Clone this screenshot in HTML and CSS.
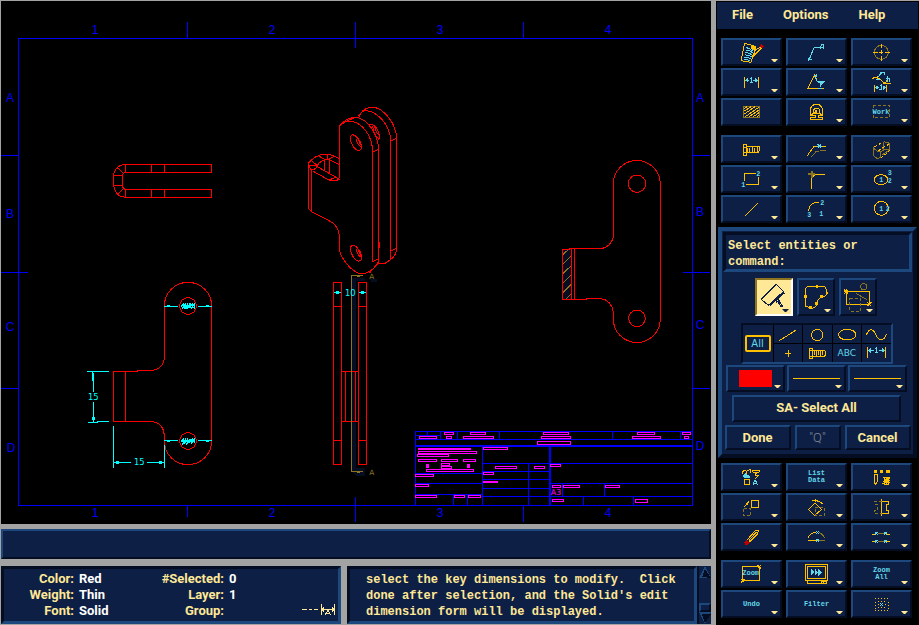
FILE: index.html
```html
<!DOCTYPE html>
<html lang="en">
<head>
<meta charset="utf-8">
<title>Drafting</title>
<link rel="stylesheet" href="styles.css">
</head>
<body>
<div class="app">
<main class="work">
<section class="canvas" aria-label="Drawing">
<svg class="drawing" viewBox="1 1 710 523" preserveAspectRatio="xMinYMin meet">
<g class="blue">
<path d="M18.500 38.500H692.500V505.500H18.500Z"/>
<path d="M187.500 22V38M523.500 22V38M355.500 22V48M187.500 505V517M523.500 505V522M355.500 497V522M1 155.500H18M1 388.500H18M693 155.500H710M693 388.500H710"/>
<path d="M1 272.500H28M683 272.500H710"/>
</g>
<g class="zone">
<text x="95" y="34">1</text><text x="272" y="34">2</text><text x="440" y="34">3</text><text x="608" y="34">4</text>
<text x="95" y="517">1</text><text x="272" y="517">2</text><text x="440" y="517">3</text><text x="608" y="517">4</text>
<text x="10" y="102">A</text><text x="10" y="218">B</text><text x="10" y="331">C</text><text x="11" y="452">D</text>
<text x="700" y="102">A</text><text x="700" y="216">B</text><text x="700" y="329">C</text><text x="700" y="450">D</text>
</g>
<!-- top view and side view -->
<g transform="translate(80 150) scale(.33333)">
<path class="r" d="M136 43H395V67H136ZM136 118H395V142H136ZM214 43V67M253 43V67M214 118V142M253 118V142M136 43Q123 43 112 53Q101 65 101 76V106Q102 120 112 133Q123 142 136 142M136 67Q127 71 127 77V106Q128 116 136 118M101 76H127M101 106H127M112 53L130 70M112 133L130 116"/>
<path class="r" d="M253 625V468A71 71 0 0 1 395 468V873A71 71 0 0 1 253 873V855Q250 820 219 815H101V664H174V661H219Q250 655 253 625ZM136 664V815"/>
<circle class="r" cx="324" cy="468" r="25"/><circle class="r" cx="324" cy="873" r="25"/>
<path class="dim" d="M253 469H293M354 469H395M253 872H293M354 872H395M260 466H270M378 466H387M260 875H270M378 875H387M21 664H87M38 667V692M41 670V726M41 756V817M24 818H54V815H87M101 828V953M253 885V953M101 937H153M201 937H253"/>
<path class="dim" d="M302 472L312 460L308 477L318 458L314 477L324 461L320 478L331 459L328 474L338 461L335 476L343 460V478M303 466H345M306 472H342M302 877L312 865L308 884L318 863L314 882L324 864L320 884L331 866L328 878L338 866L335 881L343 865V880M303 871H345M306 876H342"/>
<path class="cf" d="M107 933H117V942H107ZM237 933H247V942H237ZM36 801H45V811H36ZM38 670H43V680H38Z"/>
<text class="dimtext" x="40" y="750">15</text><text class="dimtext" x="178" y="946">15</text>
</g>
<!-- isometric view -->
<g class="r" transform="translate(290 90) scale(.33333)">
<path d="M149 262V108Q163 94 178 93C215 95 247 135 248 186V515M149 108Q166 84 195 82C235 84 264 135 266 180V515Q248 548 215 552C182 546 154 505 148 480V438Q146 405 115 391L65 365L55 355V220"/>
<path d="M172 93L195 82H206Q215 55 245 51C282 53 318 100 320 145V478Q316 502 300 510L285 520H264M206 78Q215 62 230 62C262 65 300 105 302 150V508M302 153L320 145M248 186L266 178M302 483L320 475M248 515L266 507M238 549L264 520M243 548V540M268 456V475"/>
<path d="M181 140Q188 128 202 143Q216 158 215 174Q209 189 196 177Q180 160 181 140M198 147Q203 166 213 170M206 150Q207 160 214 166M181 472Q188 460 202 473Q216 489 215 506Q209 520 196 508Q180 491 181 472M198 478Q203 497 213 501M206 481Q207 491 214 497M238 103Q256 102 265 125Q270 138 266 150M248 108Q250 128 260 140L268 148M254 110Q256 126 268 136"/>
<path d="M55 220Q75 195 105 192Q130 193 149 208M65 365V242L55 226M58 226H82Q79 238 65 240M64 212L82 226M82 226Q92 210 115 207L149 224M103 210V242M118 207V250M88 199L106 209M112 193V207M68 243L122 273H140L149 262M82 230L138 262L149 268M118 270L136 262M133 198L118 207"/>
</g>
<!-- front view with section line -->
<g transform="translate(310 265) scale(.33333)">
<path class="shade" d="M125 40H165V48H138V610H164V634H140L125 619ZM180 42H200V50H184Z"/>
<path class="r" d="M70 52H95V598H70ZM70 124H95M70 526H95M145 52H170V598H145ZM145 124H170M145 526H170M95 319H145V469H95ZM107 319V469M136 319V469"/>
<path class="d" d="M158 31H125V619H158M140 34H150M140 622H150"/>
<text class="mark" x="185" y="43">A</text><text class="mark" x="185" y="631">A</text>
<path class="dim" d="M71 82H94M146 82H169"/>
<path class="cf" d="M78 79H88V87H78ZM153 79H163V87H153Z"/>
<text class="dimtext" x="121" y="92">10</text>
</g>
<!-- section A-A -->
<g transform="translate(540 150) scale(.33333)">
<path class="shade" d="M69 300H93V446H69Z"/>
<path class="d" d="M69 313L86 298M68 343L94 317M68 371L94 347M68 400L94 375M68 429L94 403M77 448L94 432"/>
<path class="r" d="M220 262V102A70.500 70.500 0 0 1 361 102V507A70.500 70.500 0 0 1 220 507V485Q214 450 180 445H140V448H67V298H90V296H185Q212 290 220 262ZM94 298V448M103 298V448"/>
<circle class="r" cx="291" cy="101" r="26"/><circle class="r" cx="291" cy="505" r="25"/>
</g>
<!-- title block -->
<g transform="translate(405 420) scale(.33333)">
<path class="blueline" d="M31 256V34H862M31 58H862M31 46H106M68 34V46M106 34V58M157 34V58M283 34V58M622 34V58M826 34V58M31 76H862M31 80H862M232 80V256M433 80V256M436 80V256M232 130H862M370 130V256M232 154H433M232 178H433M232 205H433M31 160H232M31 190H232M31 223H232M145 223V256M187 223V256M433 190H862M232 229H862M472 190V229M598 190V229M535 229V256M685 229V256"/>
<path class="mag" d="M118 37H146V44H118ZM198 37H242V44H198ZM415 37H491V44H415ZM697 37H749V44H697ZM832 37H857V44H832ZM43 49H95V56H43ZM124 49H140V56H124ZM175 49H266V56H175ZM409 49H497V56H409ZM682 49H767V56H682ZM838 49H851V56H838ZM397 64H497V74H397ZM235 82H308V89H235ZM40 94H215V101H40ZM37 103H131V110H37ZM40 118H95V125H40ZM109 118H158V125H109ZM175 118H212V125H175ZM109 130H134V137H109ZM109 139H140V146H109ZM64 148H206V155H64ZM33 163H86V170H33ZM33 193H71V200H33ZM33 226H95V233H33ZM148 226H179V233H148ZM190 226H227V233H190ZM271 139H335V146H271ZM388 139H419V146H388ZM235 157H266V164H235ZM438 133H467V140H438ZM442 196H467V203H442ZM475 196H524V203H475ZM601 196H644V203H601ZM442 238H476V245H442ZM691 238H728V248H691Z"/>
<path class="mf" d="M39 84H198V90H39ZM63 132H72V144H63ZM186 132H195V144H186ZM234 183H279V189H234Z"/>
<text class="size" x="453" y="226">A3</text>
</g>
</svg>
</section>
<div class="prompt" role="status"></div>
<div class="footer">
<section class="status">
<dl>
<dt>Color:</dt><dd>Red</dd><dt>#Selected:</dt><dd>0</dd>
<dt>Weight:</dt><dd>Thin</dd><dt>Layer:</dt><dd>1</dd>
<dt>Font:</dt><dd>Solid</dd><dt>Group:</dt><dd></dd>
</dl>
<svg class="mode" viewBox="903 282 108 36"><path class="y" d="M906 298H921M927 298H936M942 298H954M964 283V315M1004 283V315M966 298H1002M966 298L972 292M966 298L972 304M1002 298L996 292M1002 298L996 304M975 316L984 301L993 316M978 311H991"/></svg>
</section>
<section class="help">
<p>select the key dimensions to modify.&nbsp; Click<br>done after selection, and the Solid's edit<br>dimension form will be displayed.</p>
</section>
<div class="scroll">
<button type="button" aria-label="Scroll up"><svg viewBox="0 0 12 12"><path class="lite" d="M0 12L6 0L12 12Z"/><path class="deep" d="M3 11L6 3L12 12Z"/></svg></button>
<div class="track"><span class="thumb"></span></div>
<button type="button" aria-label="Scroll down"><svg viewBox="0 0 12 12"><path class="lite" d="M0 0H12L6 12Z"/><path class="deep" d="M3 2H12L6 11Z"/></svg></button>
</div>
</div>
</main>
<aside class="panel">
<nav class="menu"><button type="button">File</button><button type="button">Options</button><button type="button">Help</button></nav>
<div class="tools">
<button type="button" class="tool" aria-label="Sheet"><svg viewBox="24 120 171 72"><path class="o" d="M89 130L78 182L108 187L120 151M89 130L122 139L120 151L141 139M119 160L110 170L112 172L141 143"/><path class="of" d="M108 136L122 139V149H110Z"/><path class="c" d="M93 143L102 145L110 152L118 148M92 150L104 153L113 158M90 157L102 160L111 164M89 164L101 167L110 170M87 171L98 173L108 176M86 178L96 179L106 182"/><path class="rf" d="M134 138L140 133L148 140L140 145Z"/></svg></button>
<button type="button" class="tool" aria-label="Leader note"><svg viewBox="219 120 171 72"><path class="c" d="M282 180L297 143H312M281 173V181L290 177M315 147L320 134H324V147M315 142H324M312 142H327"/></svg></button>
<button type="button" class="tool" aria-label="Centre mark"><svg viewBox="414 120 171 72"><circle class="d" cx="499" cy="157" r="21"/><path class="o" d="M474 157H488M493 157H505M510 157H525M499 132V145M499 151V163M499 168V182"/></svg></button>
<button type="button" class="tool" aria-label="Linear dimension"><svg viewBox="24 210 171 72"><path class="o" d="M89 231V263M131 231V263"/><path class="c" d="M91 241H103M115 241H129M106 237L110 233V246M106 246H114M92 241L98 237V245ZM128 241L122 237V245Z"/></svg></button>
<button type="button" class="tool" aria-label="Surface symbol"><svg viewBox="219 210 171 72"><path class="o" d="M277 265H327M279 263L298 225L305 240"/><path class="c" d="M296 228L304 224L302 236M303 239L309 246H326M309 243H329M312 248H323M315 250V262M309 264H321"/><path class="cf" d="M310 243H329L318 258Z"/></svg></button>
<button type="button" class="tool" aria-label="Edit dimension"><svg viewBox="414 210 171 72"><path class="o" d="M472 236Q482 229 492 236L510 250L520 236M486 228V238M503 250H527M479 254V276M515 254V276"/><path class="c" d="M481 263H491M503 263H513M482 263L488 259V267ZM512 263L506 259V267ZM494 259L498 256V268M492 268H501M484 237H494M490 230L496 222V217H508V225M500 223V218M517 228V245M513 235H522V245"/></svg></button>
<button type="button" class="tool plain" aria-label="Hatch"><svg viewBox="24 300 171 72"><path class="d" d="M85 318H134V353H85Z"/><path class="o" d="M88 325L96 320M88 333L108 320M88 342L120 320M91 350L131 322M102 350L132 330M115 350L132 338M126 350L132 346"/></svg></button>
<button type="button" class="tool" aria-label="Symbol"><svg viewBox="219 300 171 72"><path class="o" d="M286 352H300V347H286V330Q287 318 299 313H310Q322 319 323 330V347H310V352H323V359H286Z"/><circle class="o" cx="305" cy="333" r="9"/><circle class="o" cx="303" cy="335" r="3"/><path class="o" d="M295 340L289 346M314 340L320 346"/></svg></button>
<button type="button" class="tool" aria-label="Work area"><svg viewBox="414 300 171 72"><path class="d dash" d="M475 316H524V353H475Z"/><text class="tiny" x="498" y="341">Work</text></svg></button>
</div>
<div class="tools">
<button type="button" class="tool" aria-label="Bolt"><svg viewBox="24 21 171 72"><path class="o" d="M86 43H94V76H86ZM86 51H94M86 67H94M94 50H134L131 68H94M97 54V65M103 54V65L106 68M112 50V68M118 54V65L121 68M127 50V68"/></svg></button>
<button type="button" class="tool" aria-label="Offset"><svg viewBox="219 21 171 72"><path class="o" d="M277 77L297 49H305M320 49H333"/><path class="d" d="M287 82L304 64H311M316 62H333"/><path class="c" d="M305 49H321M308 43L318 53M318 43L308 53"/></svg></button>
<button type="button" class="tool" aria-label="Solid"><svg viewBox="414 21 171 72"><path class="d" d="M475 54L487 63H497V82L487 86L476 77ZM506 35L524 40V60L500 76M506 36V60L497 66M500 56L524 60"/><path class="o dash" d="M478 51L505 35M490 62L522 42M497 85L524 62"/></svg></button>
<button type="button" class="tool" aria-label="Rectangle"><svg viewBox="24 111 171 72"><path class="o" d="M89 154V131H122M131 142V163H94"/><text class="num" x="130" y="137">2</text><text class="num" x="85" y="170">1</text></svg></button>
<button type="button" class="tool" aria-label="Fillet"><svg viewBox="219 111 171 72"><path class="o" d="M290 177V148Q292 135 306 133H330"/><path class="d wide" d="M279 133H300M290 122V144"/></svg></button>
<button type="button" class="tool" aria-label="Ellipse"><svg viewBox="414 111 171 72"><ellipse class="o" cx="498" cy="149" rx="20" ry="15"/><text class="num" x="499" y="155">1</text><text class="num" x="524" y="135">3</text><text class="num" x="524" y="158">2</text></svg></button>
<button type="button" class="tool" aria-label="Line"><svg viewBox="24 201 171 72"><path class="o" d="M91 257L129 219"/></svg></button>
<button type="button" class="tool" aria-label="Arc"><svg viewBox="219 201 171 72"><path class="o" d="M281 242Q283 221 302 217H312"/><text class="num" x="322" y="224">2</text><text class="num" x="283" y="260">3</text><text class="num" x="319" y="257">1</text></svg></button>
<button type="button" class="tool" aria-label="Circle"><svg viewBox="414 201 171 72"><circle class="o" cx="499" cy="235" r="21"/><text class="num" x="499" y="242">1</text><text class="num" x="518" y="243">2</text></svg></button>
</div>
<section class="dialog">
<p class="message">Select entities or<br>command:</p>
<div class="picks">
<button type="button" class="pick on" aria-label="Pick single"><svg viewBox="126 30 102 102"><path class="k" d="M139 88L183 43L206 64L160 106ZM162 105L206 67M164 107L208 69M183 88L200 112M185 100V88L196 91M190 102V92L202 108M194 95L204 112"/></svg></button>
<button type="button" class="pick" aria-label="Pick chain"><svg viewBox="252 30 102 102"><path class="o" d="M271 104V65Q271 50 280 49H326Q335 51 335 68Q334 81 322 80Q312 82 305 97L303 109Q296 117 286 113L271 108Z"/><path class="of" d="M302 45H308V53H302ZM267 76H275V83H267ZM332 65H340V72H332ZM315 76H323V84H315ZM300 96H308V105H300ZM283 108H290V117H283Z"/></svg></button>
<button type="button" class="pick" aria-label="Pick window"><svg viewBox="378 30 102 102"><path class="o" d="M394 65H463V103H394ZM388 59L400 71M400 59L388 71M394 58V72M388 65H401M457 97L469 109M469 97L457 109"/><circle class="d" cx="446" cy="50" r="9"/><path class="d" d="M422 70L455 88"/><path class="d dash" d="M404 86H437V123H404Z"/></svg></button>
</div>
<div class="filters">
<button type="button" class="all"><span>All</span></button>
<button type="button" aria-label="Lines"><svg viewBox="177 165 84 54"><path class="o" d="M192 212L243 180"/></svg></button>
<button type="button" aria-label="Circles"><svg viewBox="264 165 84 54"><circle class="o" cx="306" cy="195" r="17"/></svg></button>
<button type="button" aria-label="Ellipses"><svg viewBox="354 165 84 54"><ellipse class="o" cx="396" cy="194" rx="26" ry="16"/></svg></button>
<button type="button" aria-label="Splines"><svg viewBox="441 165 87 54"><path class="o" d="M454 196Q460 179 469 179Q478 180 483 194Q489 209 500 209Q512 207 515 193"/></svg></button>
<button type="button" aria-label="Points"><svg viewBox="177 222 84 54"><path class="o" d="M210 250H228M219 241V260"/></svg></button>
<button type="button" aria-label="Bolts"><svg viewBox="264 222 84 54"><path class="o" d="M283 235H292V265H283ZM283 242H292M283 258H292M292 240H328L332 250L328 260H292M297 244V256M303 244V260M309 240V256M316 244V260M322 240V256"/></svg></button>
<button type="button" class="abc">ABC</button>
<button type="button" aria-label="Dimensions"><svg viewBox="441 222 87 54"><path class="o" d="M457 232V265M513 232V265"/><path class="c" d="M459 241H478M492 241H511M482 237L486 233V248M482 248H491M460 241L467 236V246ZM510 241L503 236V246Z"/></svg></button>
</div>
<div class="styles">
<button type="button" class="tool" aria-label="Color"><svg viewBox="39 291 165 69"><path class="swatch" d="M72 300H171V351H72Z"/></svg></button>
<button type="button" class="tool" aria-label="Weight"><svg viewBox="222 291 165 69"><path class="o" d="M234 325H375"/></svg></button>
<button type="button" class="tool" aria-label="Line font"><svg viewBox="405 291 165 69"><path class="o" d="M417 325H558"/></svg></button>
</div>
<button type="button" class="wide-button">SA- Select All</button>
<div class="actions"><button type="button">Done</button><button type="button" class="off">"Q"</button><button type="button">Cancel</button></div>
</section>
<div class="tools">
<button type="button" class="tool" aria-label="Modify entities"><svg viewBox="24 45 171 72"><path class="o" d="M83 72V65L90 60L96 66L91 76M96 61L106 59V68M112 63L116 60H130L134 64L130 68H116ZM126 67L120 73V77L130 76M131 76L120 87"/><circle class="o" cx="96" cy="96" r="9"/><path class="cf" d="M85 76L91 70L98 74L106 78V84H96L85 82Z"/><path class="c" d="M114 105L119 92H122L127 105M116 100H126"/></svg></button>
<button type="button" class="tool words">List<br>Data</button>
<button type="button" class="tool" aria-label="Attributes"><svg viewBox="414 45 171 72"><path class="of" d="M477 60H486V69H477ZM495 60H504V69H495ZM513 60H525V69H513Z"/><path class="o" d="M478 74H486V97L482 104L478 97ZM504 84L510 81H522L525 84L510 88L525 91L504 94L525 97L504 100L510 104H522M508 83V103M514 83V103M520 83V103"/></svg></button>
<button type="button" class="tool" aria-label="Move"><svg viewBox="24 135 171 72"><path class="o" d="M109 152H131V173H109ZM88 170L101 155"/><path class="of" d="M91 162L102 153L97 167Z"/><path class="d dash" d="M86 176H107V197H86Z"/></svg></button>
<button type="button" class="tool" aria-label="Rotate"><svg viewBox="219 135 171 72"><path class="o" d="M280 179L300 160L320 178L299 196ZM292 151H305Q316 154 323 162M306 157V151"/><path class="of" d="M293 152L304 147V157Z"/><path class="d dash" d="M300 172H328V196H300Z"/></svg></button>
<button type="button" class="tool" aria-label="Mirror"><svg viewBox="414 135 171 72"><path class="o" d="M500 147V197M500 154H521V163H513V181H521V191H500"/><path class="d dash" d="M500 154H479V163H487V181H479V191H500"/></svg></button>
<button type="button" class="tool" aria-label="Pen"><svg viewBox="24 225 171 72"><path class="o" d="M97 269L120 243L131 240L128 251L104 276M102 271L124 246"/><path class="rf" d="M87 276L94 270L104 277L98 285H92Z"/></svg></button>
<button type="button" class="tool" aria-label="Trim"><svg viewBox="219 225 171 72"><path class="o" d="M279 264Q286 247 304 247M279 271H305"/><path class="d" d="M311 247Q324 252 329 264M311 271H329"/><path class="c" d="M303 243L312 251M312 243L303 251M304 267L312 275M312 267L304 275"/></svg></button>
<button type="button" class="tool" aria-label="Break"><svg viewBox="414 225 171 72"><path class="o" d="M471 254H478L482 250M514 250L518 254H525M471 274H482M514 274H525"/><path class="d" d="M488 250H507M488 274H507"/><path class="c" d="M480 246L488 254M488 246L480 254M507 246L515 254M515 246L507 254M480 270L488 278M488 270L480 278M507 270L515 278M515 270L507 278"/></svg></button>
</div>
<div class="tools">
<button type="button" class="tool" aria-label="Zoom window"><svg viewBox="24 336 171 72"><path class="o" d="M82 349H133V391H82ZM128 345L138 355M138 345L128 355M78 387L88 397M88 387L78 397"/><text class="tiny" x="107" y="375">Zoom</text></svg></button>
<button type="button" class="tool" aria-label="Redraw"><svg viewBox="219 336 171 72"><path class="o" d="M271 343H338V391H271ZM277 349H332V386H277ZM277 391V401H333V391M318 401V394H333M326 394V401"/><path class="cf" d="M288 355L298 367L288 378ZM299 355L309 367L299 378ZM310 355L321 367L310 378Z"/></svg></button>
<button type="button" class="tool words">Zoom<br>All</button>
<button type="button" class="tool words">Undo</button>
<button type="button" class="tool words">Filter</button>
<button type="button" class="tool" aria-label="Grid snap"><svg viewBox="414 426 171 72"><path class="o dots" d="M480 446H521M480 482H521M480 455V482M520 455V482M489 455H512M489 473H512M489 464H492M509 464H512"/><path class="c" d="M495 459L504 468M504 459L495 468"/></svg></button>
</div>
</aside>
</div>
</body>
</html>
```
FILE: styles.css
```css
:root {
  --navy: #0e1f45;
  --edge: #1d487e;
  --deep: #050d22;
  --cream: #ffe896;
  --orange: #ffc000;
  --dull: #8c7420;
  --cyan: #62d8e8;
  --gray: #a3a3a3;
}

* { box-sizing: border-box; }

body {
  margin: 0;
  background: var(--gray);
  color: var(--cream);
  font: bold 13px/16px Roboto, "Liberation Sans", sans-serif;
}

p, dl, dd { margin: 0; }

button {
  margin: 0;
  padding: 0;
  min-width: 0;
  border: 2px solid;
  border-color: var(--edge) var(--deep) var(--deep) var(--edge);
  background: var(--navy);
  color: inherit;
  font: inherit;
}

.app {
  display: grid;
  grid-template-columns: minmax(0, 1fr) 203px;
  gap: 5px;
  min-height: 100vh;
  padding: 1px 0 0 1px;
}

/* drawing side */
.work {
  display: flex;
  flex-direction: column;
  padding-bottom: 1px;
}

.canvas {
  flex: 1;
  min-height: 0;
  background: #000;
}

.drawing {
  display: block;
  width: 100%;
  height: auto;
}

svg { display: block; }

svg path, svg circle, svg ellipse {
  fill: none;
  stroke-width: 1px;
  vector-effect: non-scaling-stroke;
  shape-rendering: crispEdges;
}

.blue, .blueline { stroke: #0000ff; }
.r { stroke: #f00; }
.o { stroke: var(--orange); }
.c { stroke: var(--cyan); }
.d { stroke: var(--dull); }
.y { stroke: var(--cream); }
.k { stroke: var(--navy); }
.dim { stroke: #0ff; }
.mag { stroke: #f0f; }
svg .of { fill: var(--orange); }
svg .cf { fill: var(--cyan); }
svg .rf { fill: #c00000; }
svg .mf { fill: #f0f; }
svg .shade { fill: var(--deep); }
svg .swatch { fill: #f00; }
svg .lite { fill: var(--edge); }
svg .deep { fill: var(--deep); }
svg .wide { stroke-width: 2px; }
.drawing .cf { fill: #0ff; }
.dash { stroke-dasharray: 3 2; }
.dots { stroke-dasharray: 1 2; }

text { text-anchor: middle; font-weight: normal; }
.zone { fill: #0000ff; font: 12px "Liberation Sans", sans-serif; }
.dimtext { fill: #0ff; font: 25px "DejaVu Sans", sans-serif; }
.mark { fill: var(--dull); font: 22px "DejaVu Sans", sans-serif; }
.size { fill: #f0f; font: 24px "DejaVu Sans", sans-serif; }
.num { fill: var(--cyan); font: bold 20px "Liberation Mono", monospace; }
.tiny { fill: var(--cyan); font: bold 21px "Liberation Mono", monospace; }

.prompt {
  height: 30px;
  margin: 5px 0 7px;
  border: 2px solid;
  border-color: var(--edge) var(--deep) var(--deep) var(--edge);
  background: var(--navy);
}

.footer {
  display: grid;
  grid-template-columns: minmax(0, 346fr) minmax(0, 350fr) 14px;
  height: 58px;
}

.status, .help {
  border: 3px solid;
  border-color: var(--deep) var(--edge) var(--edge) var(--deep);
  background: var(--navy);
}

.status {
  display: flex;
  justify-content: space-between;
  align-items: flex-start;
  padding: 2px 1px 0 0;
  margin-right: 6px;
}

.status dl {
  display: grid;
  grid-template-columns: 70px 65px 75px 20px;
  column-gap: 5px;
}

.status dt { text-align: right; }
.status dd { color: #fff; }

.mode {
  align-self: flex-end;
  width: 36px;
  height: 12px;
  margin-bottom: 5px;
}

.help {
  padding: 3px 0 0 16px;
  white-space: nowrap;
}

.help p, .message { font: bold 12px/16px "Liberation Mono", monospace; }

.scroll {
  display: flex;
  flex-direction: column;
  border-left: 2px solid var(--deep);
  background: var(--navy);
}

.scroll button {
  height: 12px;
  border: 0;
}

.scroll svg {
  width: 12px;
  height: 12px;
}

.track {
  display: flex;
  flex: 1;
  flex-direction: column;
  justify-content: flex-end;
}

.thumb {
  height: 9px;
  border: 2px solid;
  border-color: var(--edge) var(--deep) var(--deep) var(--edge);
}

/* command side */
.panel {
  padding: 1px 0;
  background: #000;
}

.menu {
  display: flex;
  gap: 30px;
  height: 27px;
  margin: 0 1px 9px;
  padding: 0 15px 2px;
  background: var(--navy);
}

.menu button { border: 0; }

.tools {
  display: grid;
  grid-template-columns: repeat(3, 1fr);
  grid-auto-rows: 28px;
  gap: 2px 4px;
  margin: 0 7px 9px 5px;
}

.tools:last-child { margin-bottom: 0; }

.tool, .pick {
  position: relative;
  overflow: hidden;
}

.tool svg, .pick svg, .filters svg {
  width: 100%;
  height: 100%;
}

/* drop-down marker in the lower right corner */
.tool::after, .pick::after {
  content: "";
  position: absolute;
  right: 2px;
  bottom: 2px;
  width: 7px;
  height: 3px;
  background: var(--cream);
  clip-path: polygon(0 0, 100% 0, 60% 100%, 40% 100%);
}

.plain::after { display: none; }

.words {
  color: var(--cyan);
  font: bold 7px/7px "Liberation Mono", monospace;
}

.dialog {
  display: flex;
  flex-direction: column;
  align-items: center;
  margin: -5px 2px 5px;
  padding: 1px 1px 4px;
  border: 4px solid;
  border-color: var(--edge) var(--deep) var(--deep) var(--edge);
  background: var(--navy);
}

.message {
  align-self: stretch;
  padding: 3px 2px 0;
  border: 3px solid;
  border-color: var(--deep) var(--edge) var(--edge) var(--deep);
  height: 40px;
}

.picks {
  display: flex;
  gap: 4px;
  margin: 6px 3px 7px 0;
}

.pick {
  width: 38px;
  height: 38px;
}

.on {
  border-color: #8c7420 #fff #fff #8c7420;
  background: var(--cream);
}

.on::after { background: var(--navy); }

.filters {
  display: grid;
  grid-template-columns: 30px repeat(4, 1fr);
  grid-template-rows: 18px 18px;
  gap: 1px;
  width: 152px;
  margin-right: 2px;
  border: 2px solid;
  border-color: var(--deep) var(--edge) var(--edge) var(--deep);
  background: #000;
}

.filters button { border: 0; }
.filters .all { grid-row: span 2; }

.all span {
  display: block;
  margin: 0 2px;
  border: 2px solid var(--orange);
  border-radius: 2px;
  line-height: 13px;
}

.all, .abc {
  color: var(--cyan);
  font: 10px/16px "DejaVu Sans", sans-serif;
}

.abc { font-size: 9px; }

.styles {
  display: grid;
  grid-template-columns: repeat(3, 59px);
  grid-auto-rows: 27px;
  gap: 2px;
  margin: 1px 2px 3px 0;
}

.wide-button {
  width: 169px;
  height: 27px;
  margin-right: 2px;
  padding-bottom: 2px;
}

.actions {
  display: grid;
  grid-template-columns: 66px 46px 66px;
  grid-auto-rows: 25px;
  gap: 4px;
  margin-top: 3px;
}

.off {
  color: #7f8894;
  font-weight: 300;
}
```
